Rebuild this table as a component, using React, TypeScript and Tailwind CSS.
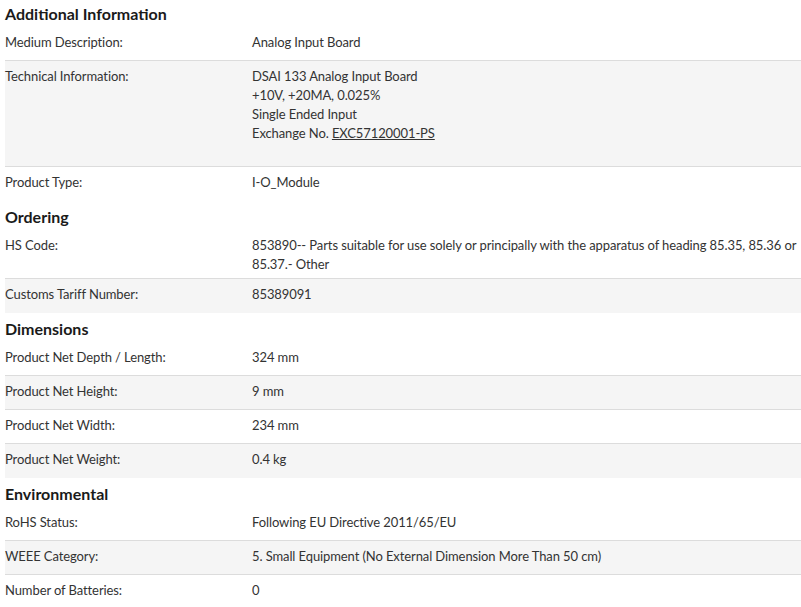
import React from "react";

type Row = {
  label: string;
  value: React.ReactNode;
};

type Section = {
  title: string;
  rows: Row[];
};

const sections: Section[] = [
  {
    title: "Additional Information",
    rows: [
      { label: "Medium Description:", value: "Analog Input Board" },
      {
        label: "Technical Information:",
        value: (
          <>
            <div>DSAI 133 Analog Input Board</div>
            <div>+10V, +20MA, 0.025%</div>
            <div>Single Ended Input</div>
            <div>
              Exchange No. <a className="underline">EXC57120001-PS</a>
            </div>
            <div className="h-[19px]" />
          </>
        ),
      },
      { label: "Product Type:", value: "I-O_Module" },
    ],
  },
  {
    title: "Ordering",
    rows: [
      {
        label: "HS Code:",
        value:
          "853890-- Parts suitable for use solely or principally with the apparatus of heading 85.35, 85.36 or 85.37.- Other",
      },
      { label: "Customs Tariff Number:", value: "85389091" },
    ],
  },
  {
    title: "Dimensions",
    rows: [
      { label: "Product Net Depth / Length:", value: "324 mm" },
      { label: "Product Net Height:", value: "9 mm" },
      { label: "Product Net Width:", value: "234 mm" },
      { label: "Product Net Weight:", value: "0.4 kg" },
    ],
  },
  {
    title: "Environmental",
    rows: [
      { label: "RoHS Status:", value: "Following EU Directive 2011/65/EU" },
      {
        label: "WEEE Category:",
        value: "5. Small Equipment (No External Dimension More Than 50 cm)",
      },
      { label: "Number of Batteries:", value: "0" },
    ],
  },
];

const App: React.FC = () => {
  return (
    <div className="bg-white pl-[5px] font-['Lato',sans-serif] text-[13px] leading-[19px] tracking-[-0.1px] text-[#333]">
      {sections.map((section, i) => (
        <section key={section.title}>
          <h3
            className={`text-[16px] leading-[20px] font-bold tracking-normal text-[#1a1a1a] ${
              i === 0 ? "pt-1 pb-[3px]" : "pt-[6px] pb-[3px]"
            }`}
          >
            {section.title}
          </h3>
          <div>
            {section.rows.map((row, j) => (
              <div
                key={row.label}
                className={`flex min-h-[34px] pt-[6px] pb-[4px] ${
                  j % 2 === 1 ? "bg-[#f5f5f5]" : "bg-white"
                } ${
                  j < section.rows.length - 1
                    ? "border-b border-[#dcdcdc]"
                    : ""
                }`}
              >
                <div className="w-[247px] shrink-0">{row.label}</div>
                <div className="flex-1">{row.value}</div>
              </div>
            ))}
          </div>
        </section>
      ))}
    </div>
  );
};

export default App;
